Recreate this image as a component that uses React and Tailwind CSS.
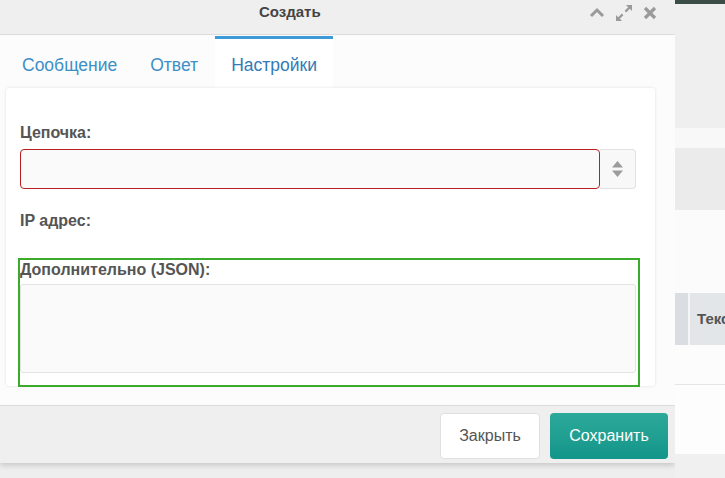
import React from 'react';

const font = { fontFamily: '"Liberation Sans", Arial, sans-serif' };

const Tab = ({ label, active }) => (
  <div
    className={
      'h-[52px] px-4 pt-[4px] flex items-center border-t-[3px] text-[17.5px] ' +
      (active ? 'border-[#3d9ad6] bg-white text-[#337ab7]' : 'border-transparent text-[#3d8fc6]')
    }
  >
    {label}
  </div>
);

const Label = ({ children }) => (
  <div className="text-[16px] leading-[17px] font-bold text-[#555]">{children}</div>
);

const Modal = () => (
  <div className="w-[675px] h-[463px] flex flex-col bg-white shadow-[0_2px_6px_rgba(0,0,0,0.18)] shrink-0">
    {/* header */}
    <div className="h-[35px] shrink-0 flex items-center pb-[9px] bg-[#efefef] border-b border-[#dcdcdc]">
      <span className="ml-[259px] text-[15px] font-bold text-[#444]">Создать</span>
      <div className="ml-auto mr-[18px] flex items-center gap-[10px] text-[#9a9a9a]">
        <svg width="16" height="16" viewBox="0 0 16 16">
          <polyline points="2,11 8,5 14,11" fill="none" stroke="currentColor" strokeWidth="3" />
        </svg>
        <svg width="18" height="18" viewBox="0 0 18 18" fill="currentColor">
          <path d="M11 1h6v6l-2.2-2.2-3.6 3.6-1.6-1.6 3.6-3.6z" />
          <path d="M7 17H1v-6l2.2 2.2 3.6-3.6 1.6 1.6-3.6 3.6z" />
        </svg>
        <svg width="14" height="14" viewBox="0 0 14 14">
          <path d="M2 2l10 10M12 2L2 12" stroke="currentColor" strokeWidth="3.2" />
        </svg>
      </div>
    </div>

    {/* body */}
    <div className="flex-1 flex flex-col bg-[#fcfcfc] border-b border-[#dcdcdc]">
      <div className="mt-[1px] pl-[6px] flex gap-[1px]">
        <Tab label="Сообщение" />
        <Tab label="Ответ" />
        <Tab label="Настройки" active />
      </div>
      <div className="ml-[6px] w-[649px] h-[298px] bg-white rounded-[3px] shadow-[0_0_3px_rgba(0,0,0,0.12)] pt-[36px] pl-[14px] pr-[19px]">
        <Label>Цепочка:</Label>
        <div className="mt-[8px] flex h-[40px]">
          <div className="flex-1 border border-[#bb2020] rounded-[4px] bg-[#fafafa]" />
          <div className="w-[36px] border border-l-0 border-[#e2e2e2] rounded-r-[4px] bg-[#f8f8f8] flex flex-col items-center justify-center">
            <svg width="11" height="16" viewBox="0 0 11 16" fill="#9c9c9c">
              <path d="M5.5 0L11 6.5H0z" />
              <path d="M5.5 16L11 9.5H0z" />
            </svg>
          </div>
        </div>
        <div className="mt-[23px]">
          <Label>IP адрес:</Label>
        </div>
        <div className="mt-[31px] outline-2 outline-[#3aab2b] pt-[1px] pb-[12px] mr-[-2px]">
          <Label>Дополнительно (JSON):</Label>
          <div className="mt-[6px] mr-[2px] h-[89px] border border-[#e3e3e3] rounded-[3px] bg-[#fafafa]" />
        </div>
      </div>
    </div>

    {/* footer */}
    <div className="h-[57px] shrink-0 bg-[#efefef] flex justify-end gap-[10px] pt-[7px] pr-[7px]">
      <button className="w-[100px] h-[46px] bg-white border border-[#e0e0e0] rounded-[4px] text-[16px] text-[#555]">
        Закрыть
      </button>
      <button className="w-[118px] h-[46px] bg-linear-to-b from-[#2ca999] to-[#12958a] rounded-[4px] text-[16px] text-white">
        Сохранить
      </button>
    </div>
  </div>
);

const Backdrop = () => (
  <div className="flex-1 min-w-0 flex flex-col overflow-hidden">
    <div className="h-[4px] shrink-0 bg-[#3b4d47]" />
    <div className="h-[124px] shrink-0 bg-[#efefef]" />
    <div className="h-[20px] shrink-0 bg-[#f8f8f8]" />
    <div className="h-[62px] shrink-0 bg-[#ebebeb]" />
    <div className="h-[83px] shrink-0 bg-[#fbfbfb]" />
    <div className="h-[52px] shrink-0 flex">
      <div className="w-[13px] shrink-0 bg-[#dadee2]" />
      <div className="w-[2px] shrink-0 bg-[#f5f5f5]" />
      <div className="flex-1 min-w-0 overflow-hidden bg-[#e3e6e9] pl-[7px] flex items-center text-[15px] font-bold text-[#555] whitespace-nowrap">
        Текст
      </div>
    </div>
    <div className="h-[40px] shrink-0 bg-[#fcfcfc] border-b border-[#e5e5e5]" />
    <div className="h-[69px] shrink-0 bg-[#fdfdfd]" />
    <div className="flex-1 bg-[#f0f0f0]" />
  </div>
);

export default function App() {
  return (
    <div className="w-[725px] h-[478px] bg-[#eeeeee] flex overflow-hidden" style={font}>
      <Modal />
      <Backdrop />
    </div>
  );
}
